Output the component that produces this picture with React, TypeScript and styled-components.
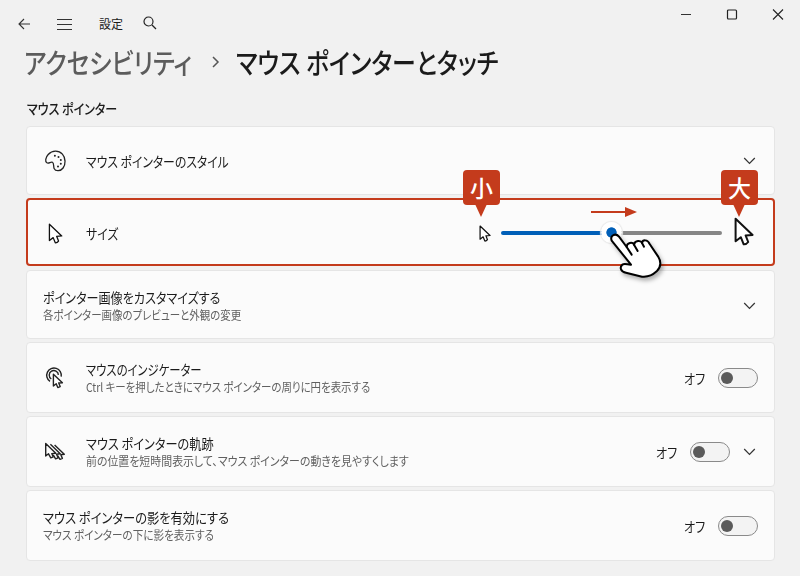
import React from "react";
import styled, { createGlobalStyle } from "styled-components";

const GlobalStyle = createGlobalStyle`
  * { box-sizing: border-box; }
  body { margin: 0; background: #f1f1f1; overflow: hidden; }
  svg { display: block; flex: none; }
`;

const Window = styled.main`
  width: 800px;
  height: 576px;
  background: #f1f1f1;
  color: #1b1b1b;
  font-family: "Noto Sans CJK JP", sans-serif;
  font-feature-settings: "palt";
`;

const TitleBar = styled.header`
  display: flex;
  height: 45px;
  padding-left: 18px;
`;

const NavTools = styled.nav`
  display: flex;
  align-items: center;
  height: 47px;
`;

const MenuIcon = styled.svg`
  margin-left: 26px;
`;

const AppName = styled.span`
  margin: 0 20px 0 27px;
  font-size: 12px;
  line-height: 20px;
`;

const SearchIcon = styled.svg`
  margin-bottom: 2px;
`;

const WindowControls = styled.div`
  display: flex;
  gap: 34px;
  margin: 9px 16px 0 auto;
`;

const Label = styled.span<{ $size: number; $stretch?: number; $weight?: number; $color?: string }>`
  display: block;
  width: max-content;
  white-space: nowrap;
  font-size: ${(p) => p.$size}px;
  font-weight: ${(p) => p.$weight ?? 400};
  color: ${(p) => p.$color ?? "#1b1b1b"};
  transform: scaleX(${(p) => p.$stretch ?? 1});
  transform-origin: left;
`;

const Breadcrumb = styled.h1`
  display: flex;
  align-items: center;
  height: 34px;
  margin: 0;
  padding-left: 24px;
  line-height: 34px;
`;

const Crumb = styled.span<{ $width: number }>`
  width: ${(p) => p.$width}px;
`;

const SectionTitle = styled.h2`
  margin: 18px 0 7px 27px;
  height: 22px;
  line-height: 22px;
`;

const CardList = styled.section`
  display: flex;
  flex-direction: column;
  gap: 3px;
  padding: 0 25px 0 26px;
`;

const Card = styled.article<{ $height: number; $drop?: number }>`
  display: flex;
  align-items: center;
  height: ${(p) => p.$height}px;
  padding: ${(p) => p.$drop ?? 0}px 16px 0;
  background: #fbfbfb;
  border: 1px solid #e5e5e5;
  border-radius: 4px;
`;

const SizeCard = styled(Card)`
  position: relative;
  z-index: 1;
  margin-bottom: 1px;
  padding: 2px 15px 0;
  border: 2px solid #c43b1c;
`;

const IconSlot = styled.span<{ $inset?: number }>`
  width: 43px;
  padding-left: ${(p) => p.$inset ?? 0}px;
  flex: none;
`;

const TextBlock = styled.div`
  display: flex;
  flex-direction: column;
  line-height: 17px;
`;

const Trailing = styled.div`
  display: flex;
  align-items: center;
  margin-left: auto;
`;

const ToggleTrack = styled.span<{ $expandable?: boolean }>`
  display: flex;
  align-items: center;
  width: 40px;
  height: 20px;
  margin-left: 9px;
  margin-right: ${(p) => (p.$expandable ? 12 : 0)}px;
  padding-left: 2px;
  border: 1px solid #8a8a8a;
  border-radius: 10px;
  background: #f3f3f3;
`;

const ToggleKnob = styled.span`
  width: 12px;
  height: 12px;
  border-radius: 50%;
  background: #5a5a5a;
`;

const SliderGroup = styled.div`
  display: flex;
  align-items: center;
  margin-left: auto;
  margin-right: 4px;
`;

const Track = styled.div`
  position: relative;
  width: 221px;
  height: 4px;
  margin: 0 12px 0 10px;
  border-radius: 2px;
  background: linear-gradient(90deg, #005fb8 50%, #868686 50%);
`;

const Thumb = styled.span`
  position: absolute;
  left: 100px;
  top: -9px;
  width: 21px;
  height: 21px;
  border-radius: 50%;
  background: radial-gradient(circle, #005fb8 4.8px, #fff 5.5px);
  box-shadow: 0 0 1px 1px #e9e9e9;
`;

const LargePointerSlot = styled.span`
  padding-bottom: 4px;
`;

const Callout = styled.span<{ $left: number }>`
  position: absolute;
  left: ${(p) => p.$left}px;
  top: -30px;
  width: 37px;
  height: 35px;
  border-radius: 4px;
  background: #c43b1c;
  color: #fff;
  font-size: 23px;
  font-weight: 500;
  line-height: 34px;
  text-align: center;
  font-feature-settings: normal;
  &::after {
    content: "";
    position: absolute;
    left: 12px;
    top: 34px;
    border: solid transparent;
    border-width: 13px 6.5px 0;
    border-top-color: #c43b1c;
  }
`;

const DragArrow = styled.svg`
  position: absolute;
  left: 563px;
  top: 6px;
`;

const Hand = styled.svg`
  position: absolute;
  left: 532px;
  top: -10px;
  filter: drop-shadow(2px 3px 2px rgba(0, 0, 0, 0.3));
`;

const ChevronIcon = styled.svg`
  margin-right: 1px;
`;

const Chevron = () => (
  <ChevronIcon width="15" height="10" viewBox="0 0 15 10" fill="none" stroke="#333" strokeWidth="1.2">
    <path d="M2.2 2 7.5 7.3 12.8 2" />
  </ChevronIcon>
);

const Pointer = ({ w, h, stroke }: { w: number; h: number; stroke: number }) => (
  <svg width={w} height={h} viewBox="0 0 20 29" fill="#fff" stroke="#111" strokeWidth={stroke} strokeLinejoin="round">
    <path d="M1.6 1.8V24.2L6.8 20.2 9.7 27.3Q12.4 27.5 14.2 25L11.6 18.4 18.6 17.9Z" />
  </svg>
);

const Palette = () => (
  <svg width="24" height="24" viewBox="0 0 24 24" fill="none" stroke="#222" strokeWidth="1.3">
    <path d="M2.9 13.8C.9 12.5 1.4 8.5 4.2 5.5C8.2 1.2 14.6 1.1 18.4 5.1C21.9 8.8 21.7 15.5 19.1 19C16.6 22.4 11.5 22.5 10.1 19.4C9.3 17.6 10.2 14.3 8.5 13.3C6.7 12.3 4.8 15.1 2.9 13.8Z" />
    <g fill="#222" stroke="none">
      <circle cx="10.9" cy="6.8" r="1" /><circle cx="14.5" cy="8" r="1" />
      <circle cx="16.8" cy="11" r="1" /><circle cx="16.8" cy="14.7" r="1" /><circle cx="14" cy="17.5" r="1" />
    </g>
  </svg>
);

const Indicator = () => (
  <svg width="22" height="24" viewBox="0 0 22 24" fill="none" stroke="#222" strokeWidth="1.4" strokeLinejoin="round">
    <path d="M5 15.4A7.3 7.3 0 1 1 16.2 10.6" />
    <path d="M6.3 13A4.6 4.6 0 1 1 13.4 8.9" />
    <path d="M8.4 8.3V20L11.2 17.8 12.8 21.6 15.2 20.6 13.7 17 17.4 16.7Z" fill="#fff" />
  </svg>
);

const Trails = () => (
  <svg width="24" height="22" viewBox="0 0 24 22" fill="#fbfbfb" stroke="#222" strokeWidth="1.4" strokeLinejoin="round">
    <path d="M10.6 4 20.3 13.3 16.8 13.8 18.4 17.4 16 18.4 13.6 14.6" />
    <path d="M6.4 3.2 16.2 12.8 12.5 13.3 14.1 16.8 11.6 17.8 9.2 13.8" />
    <path d="M1.7 2.5V15L4.5 12.8 6.8 16.9 9.2 15.9 7.8 12.6 11.8 12.2Z" />
  </svg>
);

const Toggle = ({ expandable }: { expandable?: boolean }) => (
  <Trailing>
    <Label $size={14} $stretch={0.86}>オフ</Label>
    <ToggleTrack $expandable={expandable}><ToggleKnob /></ToggleTrack>
    {expandable && <Chevron />}
  </Trailing>
);

interface HeadingProps {
  title: string;
  titleStretch: number;
  note?: string;
  noteStretch?: number;
}

const Heading = ({ title, titleStretch, note, noteStretch }: HeadingProps) => (
  <TextBlock>
    <Label $size={14} $stretch={titleStretch}>{title}</Label>
    {note && <Label $size={12} $stretch={noteStretch} $color="#606060">{note}</Label>}
  </TextBlock>
);

export default function App() {
  return (
    <Window>
      <GlobalStyle />
      <TitleBar>
        <NavTools>
          <svg width="13" height="12" viewBox="0 0 13 12" fill="none" stroke="#333" strokeWidth="1.1"><path d="M12 6H1M6 1 1 6 6 11" /></svg>
          <MenuIcon width="15" height="12" viewBox="0 0 15 12" stroke="#333" strokeWidth="1"><path d="M0 1.5H15M0 6.5H15M0 11.5H15" /></MenuIcon>
          <AppName>設定</AppName>
          <SearchIcon width="14" height="14" viewBox="0 0 14 14" fill="none" stroke="#222" strokeWidth="1.2"><circle cx="5.5" cy="5.5" r="4.5" /><path d="M9 9 13 13" /></SearchIcon>
        </NavTools>
        <WindowControls>
          <svg width="12" height="12" viewBox="0 0 12 12" stroke="#333"><path d="M1 5.5H11" /></svg>
          <svg width="12" height="12" viewBox="0 0 12 12" fill="none" stroke="#222" strokeWidth="1.2"><rect x="1.5" y="1" width="9" height="9" rx="1" /></svg>
          <svg width="12" height="12" viewBox="0 0 12 12" stroke="#222" strokeWidth="1.1"><path d="M1 .5 11 10.5M11 .5 1 10.5" /></svg>
        </WindowControls>
      </TitleBar>
      <Breadcrumb>
        <Crumb $width={187}><Label $size={28} $weight={500} $stretch={0.855} $color="#5c5c5c">アクセシビリティ</Label></Crumb>
        <Crumb $width={25}>
          <svg width="9" height="12" viewBox="0 0 9 12" fill="none" stroke="#555" strokeWidth="1.5"><path d="M2 1 7 6 2 11" /></svg>
        </Crumb>
        <Label $size={28} $weight={500} $stretch={0.855}>マウス ポインターとタッチ</Label>
      </Breadcrumb>
      <SectionTitle><Label $size={14} $weight={500} $stretch={0.858}>マウス ポインター</Label></SectionTitle>
      <CardList>
        <Card $height={69} $drop={1}>
          <IconSlot $inset={1}><Palette /></IconSlot>
          <Heading title="マウス ポインターのスタイル" titleStretch={0.845} />
          <Trailing><Chevron /></Trailing>
        </Card>
        <SizeCard $height={68}>
          <IconSlot $inset={5}><Pointer w={15} h={21} stroke={1.8} /></IconSlot>
          <Heading title="サイズ" titleStretch={0.85} />
          <SliderGroup>
            <Pointer w={12} h={17} stroke={2.1} />
            <Track><Thumb /></Track>
            <LargePointerSlot><Pointer w={20} h={29} stroke={2} /></LargePointerSlot>
          </SliderGroup>
          <Callout $left={435}>小</Callout>
          <Callout $left={693}>大</Callout>
          <DragArrow width="46" height="12" viewBox="0 0 46 12"><path d="M0 6H36" stroke="#c43b1c" strokeWidth="2" /><path d="M34 1 46 6 34 11Z" fill="#c43b1c" /></DragArrow>
          <Hand width="120" height="100" viewBox="0 0 360 300" fill="#fff" stroke="#000" strokeWidth="6" strokeLinecap="round" strokeLinejoin="round">
            <path d="M155 152C149 136 167 128 177 140L200 171C200 157 218 155 222 164C225 150 243 151 246 159C248 148 263 148 269 162L294 199C304 215 302 232 290 244C277 256 263 262 246 260L198 248C182 245 178 232 187 224C194 219 204 225 213 224Z" />
            <path d="M200 171 215 194M222 164 233 183M246 159 252 170" fill="none" />
          </Hand>
        </SizeCard>
        <Card $height={69} $drop={2}>
          <Heading title="ポインター画像をカスタマイズする" titleStretch={0.863} note="各ポインター画像のプレビューと外観の変更" noteStretch={0.872} />
          <Trailing><Chevron /></Trailing>
        </Card>
        <Card $height={71}>
          <IconSlot $inset={2}><Indicator /></IconSlot>
          <Heading title="マウスのインジケーター" titleStretch={0.81} note="Ctrl キーを押したときにマウス ポインターの周りに円を表示する" noteStretch={0.87} />
          <Toggle />
        </Card>
        <Card $height={71}>
          <IconSlot $inset={1}><Trails /></IconSlot>
          <Heading title="マウス ポインターの軌跡" titleStretch={0.87} note="前の位置を短時間表示して、マウス ポインターの動きを見やすくします" noteStretch={0.91} />
          <Toggle expandable />
        </Card>
        <Card $height={71}>
          <Heading title="マウス ポインターの影を有効にする" titleStretch={0.876} note="マウス ポインターの下に影を表示する" noteStretch={0.882} />
          <Toggle />
        </Card>
      </CardList>
    </Window>
  );
}
